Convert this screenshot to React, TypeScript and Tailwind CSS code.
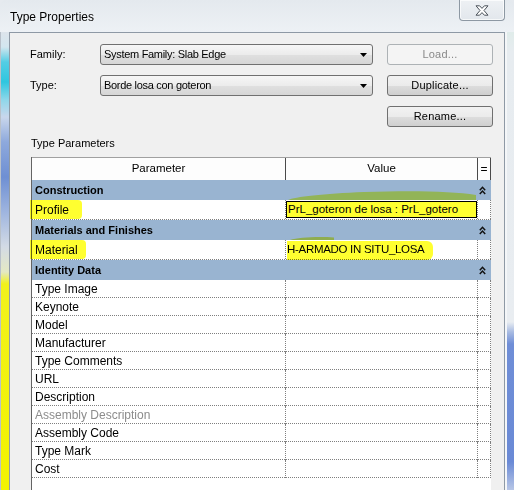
import React from "react";

const LINE = "border-[#7f7f7f]";

function Chevrons() {
  return (
    <svg width="7" height="9" viewBox="0 0 7 9" className="block">
      <path d="M0.8 4.2 L3.5 1.3 L6.2 4.2 M0.8 8 L3.5 5.1 L6.2 8" stroke="#111" strokeWidth="1.5" fill="none" />
    </svg>
  );
}

function DropArrow() {
  return (
    <svg width="7" height="4" viewBox="0 0 7 4" className="block">
      <path d="M0 0 H7 L3.5 4 Z" fill="#000" />
    </svg>
  );
}

function CloseGlyph() {
  return (
    <svg width="14" height="11" viewBox="0 0 14 11" className="block">
      <path
        d="M1 0.8 H4.6 L7 3.4 L9.4 0.8 H13 L9 5.5 L13 10.2 H9.4 L7 7.6 L4.6 10.2 H1 L5 5.5 Z"
        fill="#ffffff"
        stroke="#4b525a"
        strokeWidth="1"
        strokeLinejoin="round"
      />
    </svg>
  );
}

function Dropdown({ text }: { text: string }) {
  return (
    <div className="flex h-[21px] w-[273px] items-center rounded-[3px] border border-[#707070] bg-[linear-gradient(to_bottom,#f6f6f6,#ececec_50%,#e0e0e0_51%,#d6d6d6)] pl-[3px] pr-[5px]">
      <span className="text-[11px] tracking-[-0.3px] text-black">{text}</span>
      <span className="ml-auto">
        <DropArrow />
      </span>
    </div>
  );
}

function Button({ text, disabled }: { text: string; disabled?: boolean }) {
  if (disabled) {
    return (
      <div className="flex h-[21px] w-[106px] items-center justify-center rounded-[3px] border border-[#adb2b5] bg-[#f4f4f4] text-[11px] tracking-[0.2px] text-[#8a8a8a]">
        {text}
      </div>
    );
  }
  return (
    <div className="flex h-[21px] w-[106px] items-center justify-center rounded-[3px] border border-[#707070] bg-[linear-gradient(to_bottom,#f2f2f2,#ebebeb_50%,#dddddd_51%,#cfcfcf)] text-[11px] tracking-[0.2px] text-black">
      {text}
    </div>
  );
}

function GroupRow({ label }: { label: string }) {
  return (
    <div className="flex h-[20px] items-center bg-[#99b4d1] pl-[3px]">
      <span className="text-[11px] font-bold text-black">{label}</span>
      <span className="ml-auto mr-[5px]">
        <Chevrons />
      </span>
    </div>
  );
}

function DataRow({ label, gray }: { label: string; gray?: boolean }) {
  return (
    <div className={`grid h-[18px] grid-cols-[254px_192px_13px] border-b border-dotted ${LINE} bg-white`}>
      <div
        className={`flex items-center border-r border-dotted ${LINE} pl-[3px] text-[12px] ${
          gray ? "text-[#8c8c8c]" : "text-black"
        }`}
      >
        {label}
      </div>
      <div className={`border-r border-dotted ${LINE}`} />
      <div className={`border-r border-dotted ${LINE}`} />
    </div>
  );
}

const identity: { label: string; gray?: boolean }[] = [
  { label: "Type Image" },
  { label: "Keynote" },
  { label: "Model" },
  { label: "Manufacturer" },
  { label: "Type Comments" },
  { label: "URL" },
  { label: "Description" },
  { label: "Assembly Description", gray: true },
  { label: "Assembly Code" },
  { label: "Type Mark" },
  { label: "Cost" },
];

export default function App() {
  return (
    <div className="flex h-[490px] w-[514px] flex-col overflow-hidden bg-[#e6eaef] font-['Liberation_Sans',Arial,sans-serif] text-black">
      {/* Title bar */}
      <div className="flex h-[32px] shrink-0 rounded-t-[6px] bg-[linear-gradient(to_bottom,#e4e9ee,#edf1f5)]">
        <div className="pl-[10px] pt-[9px] text-[12px] leading-[16px] text-black [text-shadow:0_0_6px_#ffffff]">
          Type Properties
        </div>
        <div className="ml-auto mr-[9px] flex h-[21px] w-[46px] items-center justify-center self-start rounded-b-[4px] border border-t-0 border-[#8d98a3] bg-[linear-gradient(to_bottom,#eef1f4,#e2e7ec)] shadow-[inset_0_0_0_1px_rgba(255,255,255,0.7)]">
          <CloseGlyph />
        </div>
      </div>

      <div className="flex min-h-0 flex-1">
        {/* left frame */}
        <div className="w-[9px] shrink-0 border-l border-[#b9c1ca] bg-[linear-gradient(to_bottom,#dde4eb_0px,#d3e6ef_15px,#54cde4_30px,#2fc6df_50px,#8fd7ea_68px,#c9d7ec_85px,#8ea9dc_110px,#6e8fd3_145px,#9fb5df_180px,#d3dbe5_215px,#e4e8c4_240px,#f2f21c_252px,#f3f300_458px)]" />

        {/* client */}
        <div className="flex w-[496px] shrink-0 flex-col border-l border-r border-t border-[#8e99a5] bg-[#f0f0f0] pl-[20px] pt-[11px]">
          <div className="grid grid-cols-[56px_273px_106px] grid-rows-[21px_21px_21px] gap-x-[14px] gap-y-[10px]">
            <div className="flex items-center text-[11px]">Family:</div>
            <Dropdown text="System Family: Slab Edge" />
            <Button text="Load..." disabled />

            <div className="flex items-center text-[11px]">Type:</div>
            <Dropdown text="Borde losa con goteron" />
            <Button text="Duplicate..." />

            <div className="col-start-3">
              <Button text="Rename..." />
            </div>
          </div>

          <div className="ml-[1px] mt-[9px] text-[11px] leading-[14px]">Type Parameters</div>

          {/* table */}
          <div className="relative ml-[1px] mt-[7px] flex w-[460px] flex-1 flex-col border-l border-[#646464] bg-white">
            {/* header */}
            <div className="grid h-[23px] grid-cols-[254px_192px_13px] border-t border-[#a0a0a0] bg-[#fdfdfd] text-[11.5px]">
              <div className="flex items-center justify-center border-r border-[#4a4a4a]">Parameter</div>
              <div className="flex items-center justify-center border-r border-[#4a4a4a]">Value</div>
              <div className="flex items-center justify-center border-r border-[#4a4a4a] text-[12px]">=</div>
            </div>

            <GroupRow label="Construction" />
            <div className={`grid h-[20px] grid-cols-[254px_192px_13px] border-b border-dotted ${LINE} bg-white`}>
              <div className={`relative flex items-center border-r border-dotted ${LINE} pl-[3px] text-[12px]`}>
                <span className="relative">Profile</span>
                <div className="pointer-events-none absolute left-[-2px] top-0 h-[19px] w-[52px] rounded-r-[4px] bg-[#ffff30] mix-blend-multiply" />
              </div>
              <div className={`relative border-r border-dotted ${LINE}`}>
                <div className="absolute inset-x-0 top-[1px] flex h-[17px] items-center border border-black bg-[#ffff30] pl-[1px] text-[11.5px]">
                  PrL_goteron de losa : PrL_gotero
                </div>
              </div>
              <div className={`border-r border-dotted ${LINE}`} />
            </div>

            <GroupRow label="Materials and Finishes" />
            <div className={`grid h-[20px] grid-cols-[254px_192px_13px] border-b border-dotted ${LINE} bg-white`}>
              <div className={`relative flex items-center border-r border-dotted ${LINE} pl-[3px] text-[12px]`}>
                <span className="relative">Material</span>
                <div className="pointer-events-none absolute left-[-2px] top-0 h-[19px] w-[56px] rounded-r-[4px] bg-[#ffff30] mix-blend-multiply" />
              </div>
              <div className={`relative flex items-center border-r border-dotted ${LINE} pl-[1px] text-[11.5px] tracking-[-0.3px]`}>
                <span className="relative">H-ARMADO IN SITU_LOSA</span>
                <div className="pointer-events-none absolute left-[1px] top-[1px] h-[19px] w-[146px] rounded-r-[6px] bg-[#ffff30] mix-blend-multiply" />
              </div>
              <div className={`border-r border-dotted ${LINE}`} />
            </div>

            <GroupRow label="Identity Data" />
            {identity.map((r) => (
              <DataRow key={r.label} label={r.label} gray={r.gray} />
            ))}
            <div className="flex-1 bg-white" />

            {/* marker smudges over the group bands */}
            <svg
              className="pointer-events-none absolute left-0 top-0 mix-blend-multiply"
              width="460"
              height="100"
              viewBox="0 0 460 100"
            >
              <path d="M256 43 C262 40 292 36.5 332 35 C380 33.5 420 34 444 38 L444 43 Z" fill="#f4ff6a" />
              <path d="M258 83 C266 80.5 284 79.5 302 80.5 L302 83 Z" fill="#eef560" />
            </svg>
          </div>
        </div>

        {/* right frame */}
        <div className="w-[9px] shrink-0 border-l-2 border-[#f4f6f8] bg-[linear-gradient(to_bottom,#e0ecea_0px,#e7ecf0_20px,#e9edf1_290px,#a8bbe2_300px,#6f8ed7_312px,#6a8ad6_430px,#b7c6e6_458px)]" />
      </div>
    </div>
  );
}
